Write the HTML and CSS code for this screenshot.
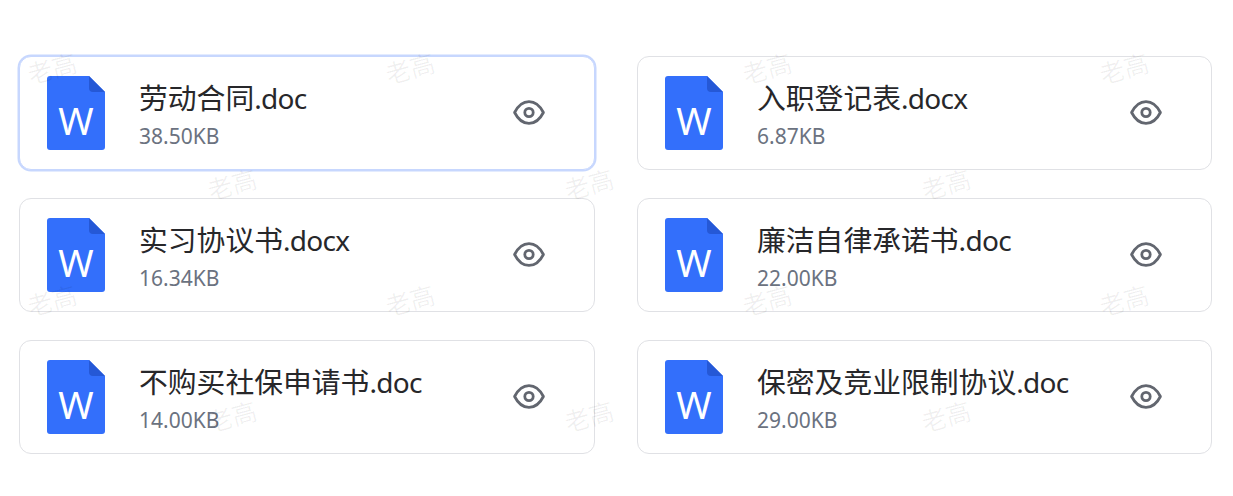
FILE: index.html
```html
<!DOCTYPE html>
<html lang="zh-CN">
<head>
<meta charset="utf-8">
<title>文件列表</title>
<link rel="stylesheet" href="styles.css">
</head>
<body>
<svg class="defs" width="0" height="0" aria-hidden="true">
  <symbol id="doc" viewBox="0 0 58 74">
    <path d="M3 0H42L58 16V71a3 3 0 0 1-3 3H3a3 3 0 0 1-3-3V3a3 3 0 0 1 3-3Z" fill="#336ffb"/>
    <path d="M42 0L58 16H46a4 4 0 0 1-4-4Z" fill="#2558d6"/>
  </symbol>
  <symbol id="eye" viewBox="0 0 32 25">
    <path d="M1.6 12.5C5 5.8 10 1.6 16 1.6S27 5.8 30.4 12.5C27 19.2 22 23.4 16 23.4S5 19.2 1.6 12.5Z" fill="none" stroke="#62666f" stroke-width="2.8" stroke-linejoin="round"/>
    <circle cx="16" cy="12.5" r="4.2" fill="none" stroke="#62666f" stroke-width="2.8"/>
  </symbol>
</svg>
<main class="grid">
  <article class="card active">
    <div class="icon"><svg class="doc"><use href="#doc"/></svg><span class="w">W</span></div>
    <div class="info"><div class="name">劳动合同<span class="ext">.doc</span></div><div class="size">38.50KB</div></div>
    <svg class="eye"><use href="#eye"/></svg>
  </article>
  <article class="card">
    <div class="icon"><svg class="doc"><use href="#doc"/></svg><span class="w">W</span></div>
    <div class="info"><div class="name">入职登记表<span class="ext">.docx</span></div><div class="size">6.87KB</div></div>
    <svg class="eye"><use href="#eye"/></svg>
  </article>
  <article class="card">
    <div class="icon"><svg class="doc"><use href="#doc"/></svg><span class="w">W</span></div>
    <div class="info"><div class="name">实习协议书<span class="ext">.docx</span></div><div class="size">16.34KB</div></div>
    <svg class="eye"><use href="#eye"/></svg>
  </article>
  <article class="card">
    <div class="icon"><svg class="doc"><use href="#doc"/></svg><span class="w">W</span></div>
    <div class="info"><div class="name">廉洁自律承诺书<span class="ext">.doc</span></div><div class="size">22.00KB</div></div>
    <svg class="eye"><use href="#eye"/></svg>
  </article>
  <article class="card">
    <div class="icon"><svg class="doc"><use href="#doc"/></svg><span class="w">W</span></div>
    <div class="info"><div class="name">不购买社保申请书<span class="ext">.doc</span></div><div class="size">14.00KB</div></div>
    <svg class="eye"><use href="#eye"/></svg>
  </article>
  <article class="card">
    <div class="icon"><svg class="doc"><use href="#doc"/></svg><span class="w">W</span></div>
    <div class="info"><div class="name">保密及竞业限制协议<span class="ext">.doc</span></div><div class="size">29.00KB</div></div>
    <svg class="eye"><use href="#eye"/></svg>
  </article>
</main>
<div class="marks" aria-hidden="true">
  <span class="mark m1">老高</span><span class="mark m2">老高</span><span class="mark m3">老高</span><span class="mark m4">老高</span>
  <span class="mark m5">老高</span><span class="mark m6">老高</span><span class="mark m7">老高</span>
  <span class="mark m8">老高</span><span class="mark m9">老高</span><span class="mark m10">老高</span><span class="mark m11">老高</span>
  <span class="mark m12">老高</span><span class="mark m13">老高</span><span class="mark m14">老高</span>
</div>
</body>
</html>
```
FILE: styles.css
```css
html, body { margin: 0; padding: 0; background: #fff; }
body {
  position: relative;
  width: 1233px;
  height: 496px;
  overflow: hidden;
  font-family: "Noto Sans", "Noto Sans CJK SC", sans-serif;
}
.defs { position: absolute; }
.grid {
  display: grid;
  grid-template-columns: 576px 575px;
  column-gap: 42px;
  row-gap: 28px;
  padding: 56px 0 0 19px;
}
.card {
  box-sizing: border-box;
  height: 114px;
  display: flex;
  align-items: center;
  padding: 0 50px 0 27px;
  border: 1px solid #e0e1e5;
  border-radius: 12px;
  background: #fff;
}
.card.active {
  border-color: #c7d7fe;
  box-shadow: 0 0 0 1.5px #c7d7fe;
}
.icon { position: relative; width: 58px; height: 74px; flex: none; }
.doc { display: block; width: 58px; height: 74px; }
.w {
  position: absolute;
  left: 0;
  right: 0;
  top: 21px;
  text-align: center;
  color: #fff;
  font-size: 38px;
  line-height: 46px;
}
.info { flex: 1; margin-left: 34px; min-width: 0; }
.name {
  font-family: "Noto Sans CJK SC", "Noto Sans", sans-serif;
  font-size: 28.8px;
  line-height: 38px;
  color: #27272a;
  white-space: nowrap;
}
.ext {
  font-family: "Noto Sans", sans-serif;
  font-size: 28px;
  letter-spacing: -0.7px;
}
.size { font-size: 21px; line-height: 26px; color: #6b7280; margin-top: 6px; }
.eye { width: 32px; height: 25px; flex: none; margin: -1px -0.5px 0 0; }
.marks { position: absolute; inset: 0; pointer-events: none; }
.mark {
  position: absolute;
  width: 60px;
  margin-left: -30px;
  margin-top: -19px;
  line-height: 36px;
  text-align: center;
  font-size: 25px;
  color: rgba(0, 0, 0, 0.06);
  transform: rotate(-15deg);
}
.m1 { left: 52px; top: 69px; }
.m2 { left: 410px; top: 69px; }
.m3 { left: 767px; top: 69px; }
.m4 { left: 1124px; top: 69px; }
.m5 { left: 232px; top: 185px; }
.m6 { left: 589px; top: 185px; }
.m7 { left: 946px; top: 185px; }
.m8 { left: 52px; top: 301px; }
.m9 { left: 410px; top: 301px; }
.m10 { left: 767px; top: 301px; }
.m11 { left: 1124px; top: 301px; }
.m12 { left: 232px; top: 417px; }
.m13 { left: 589px; top: 417px; }
.m14 { left: 946px; top: 417px; }
```
